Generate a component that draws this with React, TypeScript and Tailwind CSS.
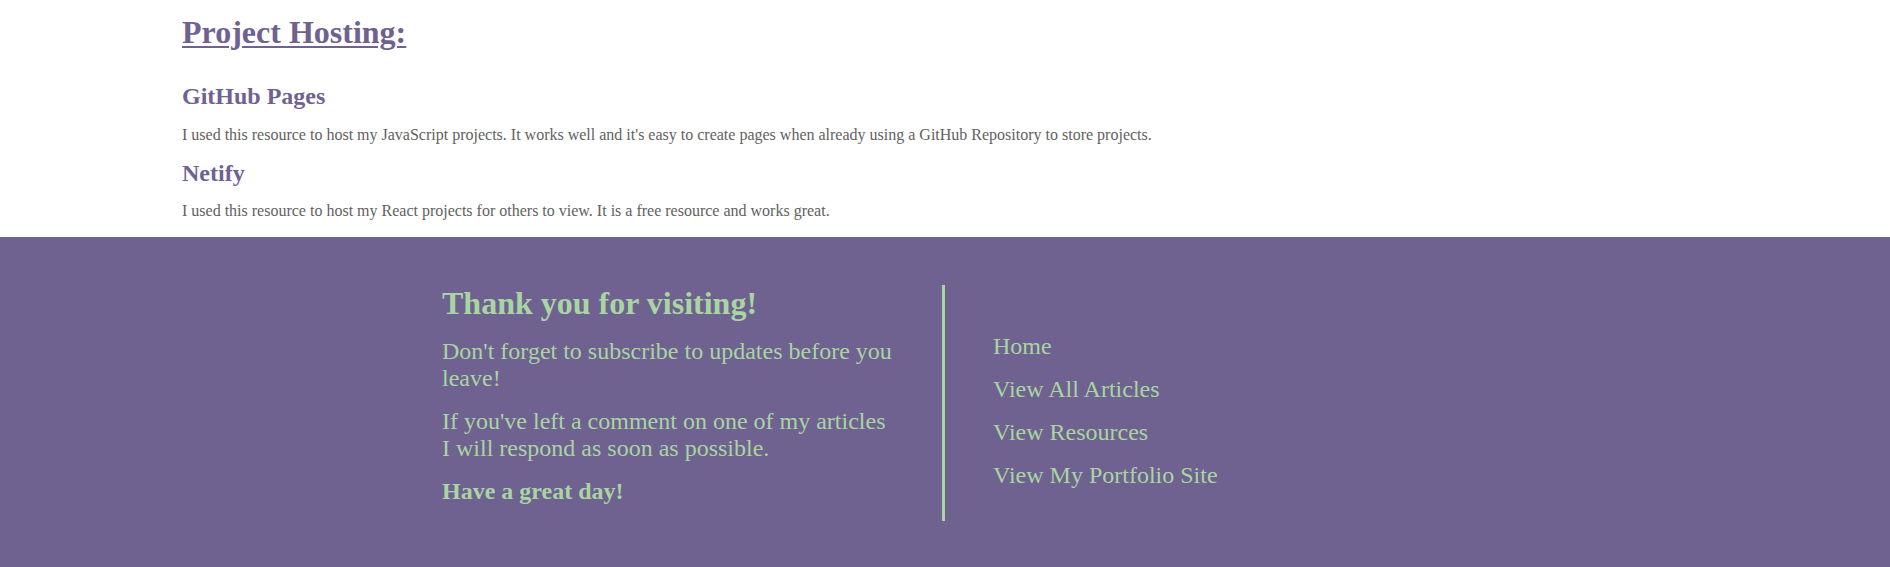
import React from "react";

const serif = { fontFamily: '"Liberation Serif", "Times New Roman", serif' };

export default function App() {
  return (
    <div className="bg-white min-h-[567px]" style={serif}>
      <main className="pl-[182px] pt-[14px] pb-[14px] text-[#6f6290]">
        <h1 className="text-[32px] leading-[37px] font-bold underline decoration-[2px] underline-offset-[3px]">
          Project Hosting:
        </h1>
        <h3 className="mt-[31px] text-[24px] leading-[28px] font-bold">GitHub Pages</h3>
        <p className="mt-[13px] text-[16px] leading-[24px] text-[#616161]">
          I used this resource to host my JavaScript projects. It works well and it's easy to create pages when already using a GitHub Repository to store projects.
        </p>
        <h3 className="mt-[12px] text-[24px] leading-[28px] font-bold">Netify</h3>
        <p className="mt-[12px] text-[16px] leading-[24px] text-[#616161]">
          I used this resource to host my React projects for others to view. It is a free resource and works great.
        </p>
      </main>
      <footer className="bg-[#6f6290] text-[#a8d5a2] pt-12 pb-[46px] flex justify-center">
        <div className="w-[503px] h-[236px] border-r-[3px] border-[#a8d5a2] pr-12 flex flex-col gap-4">
          <h2 className="text-[32px] leading-[normal] font-bold">Thank you for visiting!</h2>
          <p className="text-[24px] leading-[normal]">
            Don't forget to subscribe to updates before you leave!
          </p>
          <p className="text-[24px] leading-[normal]">
            If you've left a comment on one of my articles I will respond as soon as possible.
          </p>
          <p className="text-[24px] leading-[normal] font-bold">Have a great day!</p>
        </div>
        <div className="w-[503px] h-[236px] pl-12 pt-[48px]">
          <ul className="flex flex-col gap-4 text-[24px] leading-[normal]">
            <li><a href="#">Home</a></li>
            <li><a href="#">View All Articles</a></li>
            <li><a href="#">View Resources</a></li>
            <li><a href="#">View My Portfolio Site</a></li>
          </ul>
        </div>
      </footer>
    </div>
  );
}
